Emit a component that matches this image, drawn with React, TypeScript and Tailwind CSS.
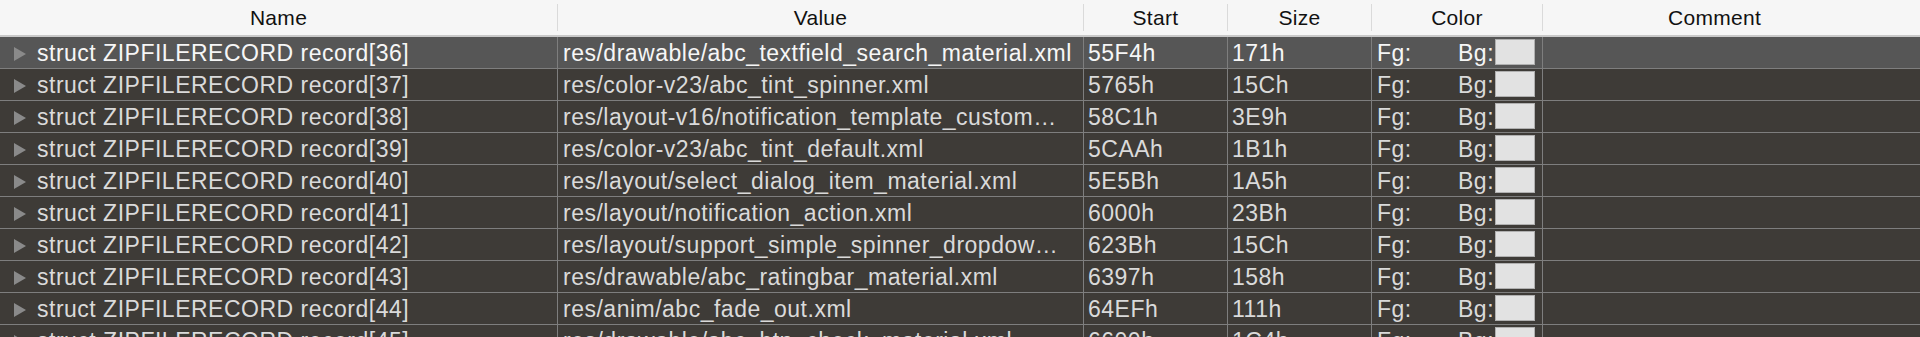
import React from 'react';

type Rec = { idx: number; value: string; start: string; size: string };

const records: Rec[] = [
  { idx: 36, value: 'res/drawable/abc_textfield_search_material.xml', start: '55F4h', size: '171h' },
  { idx: 37, value: 'res/color-v23/abc_tint_spinner.xml', start: '5765h', size: '15Ch' },
  { idx: 38, value: 'res/layout-v16/notification_template_custom…', start: '58C1h', size: '3E9h' },
  { idx: 39, value: 'res/color-v23/abc_tint_default.xml', start: '5CAAh', size: '1B1h' },
  { idx: 40, value: 'res/layout/select_dialog_item_material.xml', start: '5E5Bh', size: '1A5h' },
  { idx: 41, value: 'res/layout/notification_action.xml', start: '6000h', size: '23Bh' },
  { idx: 42, value: 'res/layout/support_simple_spinner_dropdow…', start: '623Bh', size: '15Ch' },
  { idx: 43, value: 'res/drawable/abc_ratingbar_material.xml', start: '6397h', size: '158h' },
  { idx: 44, value: 'res/anim/abc_fade_out.xml', start: '64EFh', size: '111h' },
  { idx: 45, value: 'res/drawable/abc_btn_check_material.xml', start: '6600h', size: '1C4h' },
];

const Arrow = () => (
  <svg width="12" height="14" viewBox="0 0 12 14" className="shrink-0">
    <polygon points="0,0 12,7 0,14" fill="#8a8a8a" />
  </svg>
);

const HeaderCell = ({ label, className }: { label: string; className: string }) => (
  <div className={`flex items-center justify-center ${className}`}>
    <span>{label}</span>
  </div>
);

const Row = ({ rec, selected }: { rec: Rec; selected: boolean }) => {
  const text = selected ? 'text-[#f6f6f6]' : 'text-[#dadada]';
  const cell = 'h-full flex items-center pt-[2px] overflow-hidden whitespace-nowrap';
  return (
    <div
      className={`flex h-[32px] shrink-0 border-b border-[#7e7e7e] ${selected ? 'bg-[#565656]' : 'bg-[#3e3b37]'} ${text}`}
    >
      <div className={`${cell} w-[557px] shrink-0 pl-[14px] gap-[11px]`}>
        <Arrow />
        <span>struct ZIPFILERECORD record[{rec.idx}]</span>
      </div>
      <div className={`${cell} w-[526px] shrink-0 border-l border-[#7e7e7e] pl-[5px]`}>{rec.value}</div>
      <div className={`${cell} w-[144px] shrink-0 border-l border-[#7e7e7e] pl-[4px]`}>{rec.start}</div>
      <div className={`${cell} w-[144px] shrink-0 border-l border-[#7e7e7e] pl-[4px]`}>{rec.size}</div>
      <div className={`${cell} w-[171px] shrink-0 border-l border-[#7e7e7e] pl-[5px]`}>
        <span className="w-[81px]">Fg:</span>
        <span>Bg:</span>
        <span className="ml-[1px] -mt-[3px] h-[26px] w-[40px] border border-[#b0b0b0] bg-[#e2e2e2]" />
      </div>
      <div className={`${cell} flex-1 border-l border-[#7e7e7e]`} />
    </div>
  );
};

export default function App() {
  return (
    <div
      className="w-[1920px] h-[337px] overflow-hidden bg-[#3e3b37] flex flex-col text-[23px] tracking-[0.5px]"
      style={{ fontFamily: '"Liberation Sans", Arial, sans-serif' }}
    >
      {/* column headers */}
      <div className="flex h-[37px] shrink-0 bg-[#f6f6f6] border-b-2 border-[#c9c9c9] text-[#111] text-[21px] tracking-[0.3px]">
        <HeaderCell label="Name" className="w-[557px] shrink-0" />
        <div className="w-px my-[4px] bg-[#dadada]" />
        <HeaderCell label="Value" className="w-[525px] shrink-0" />
        <div className="w-px my-[4px] bg-[#dadada]" />
        <HeaderCell label="Start" className="w-[143px] shrink-0" />
        <div className="w-px my-[4px] bg-[#dadada]" />
        <HeaderCell label="Size" className="w-[143px] shrink-0" />
        <div className="w-px my-[4px] bg-[#dadada]" />
        <HeaderCell label="Color" className="w-[170px] shrink-0" />
        <div className="w-px my-[4px] bg-[#dadada]" />
        <HeaderCell label="Comment" className="flex-1 pr-[34px]" />
      </div>

      {records.map((r, i) => (
        <Row key={r.idx} rec={r} selected={i === 0} />
      ))}
    </div>
  );
}
